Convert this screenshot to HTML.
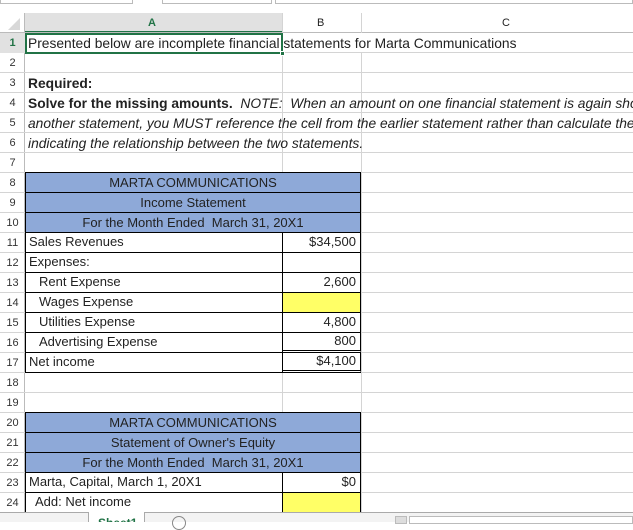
<!DOCTYPE html>
<html><head><meta charset="utf-8"><style>
*{margin:0;padding:0;box-sizing:border-box}
body{width:633px;height:522px;overflow:hidden;background:#fff;font-family:"Liberation Sans",sans-serif;font-size:13px;color:#222;position:relative}
.a{position:absolute}
.hl{position:absolute;left:0;width:633px;height:1px;background:#d4d4d4}
.vl{position:absolute;width:1px;background:#d4d4d4}
.rn{position:absolute;left:0;width:25px;text-align:center;font-size:11px;color:#333;height:20px;line-height:20px}
.t{position:absolute;white-space:nowrap;height:20px;line-height:20px}
.big{font-size:13.8px}
.blue{position:absolute;left:25px;width:336px;height:20px;background:#8ea9d8;border:1px solid #000;border-top:none;text-align:center;line-height:19px}
.cell{position:absolute;border:1px solid #000;border-top:none}
</style></head><body>
<div class="a" style="left:0;top:0;width:133px;height:4px;border:1px solid #bbb;border-top:none"></div>
<div class="a" style="left:162px;top:0;width:110px;height:4px;border:1px solid #bbb;border-top:none"></div>
<div class="a" style="left:275px;top:0;width:358px;height:4px;border:1px solid #bbb;border-top:none"></div>
<div class="a" style="left:25px;top:13px;width:257px;height:20px;background:#e1e1e1;border-bottom:2px solid #217346"></div>
<div class="a" style="left:282px;top:13px;width:351px;height:20px;background:#fff"></div>
<div class="a" style="left:0;top:32px;width:633px;height:1px;background:#bbb"></div>
<div class="a" style="left:24px;top:13px;width:1px;height:500px;background:#bbb"></div>
<div class="a" style="left:8px;top:18px;width:0;height:0;border-left:12px solid transparent;border-bottom:12px solid #d8d8d8"></div>
<div class="t" style="left:148px;top:13px;color:#217346;font-size:11px;font-weight:bold">A</div>
<div class="t" style="left:317px;top:13px;font-size:11px">B</div>
<div class="t" style="left:502px;top:13px;font-size:11px">C</div>
<div class="vl" style="left:282px;top:13px;height:20px"></div>
<div class="vl" style="left:361px;top:13px;height:20px"></div>
<div class="vl" style="left:282px;top:53px;height:120px"></div>
<div class="vl" style="left:361px;top:53px;height:460px"></div>
<div class="vl" style="left:282px;top:373px;height:40px"></div>
<div class="hl" style="top:52px"></div><div class="hl" style="top:72px"></div><div class="hl" style="top:92px"></div><div class="hl" style="top:112px"></div><div class="hl" style="top:132px"></div><div class="hl" style="top:152px"></div><div class="hl" style="top:172px"></div><div class="hl" style="top:192px"></div><div class="hl" style="top:212px"></div><div class="hl" style="top:232px"></div><div class="hl" style="top:252px"></div><div class="hl" style="top:272px"></div><div class="hl" style="top:292px"></div><div class="hl" style="top:312px"></div><div class="hl" style="top:332px"></div><div class="hl" style="top:352px"></div><div class="hl" style="top:372px"></div><div class="hl" style="top:392px"></div><div class="hl" style="top:412px"></div><div class="hl" style="top:432px"></div><div class="hl" style="top:452px"></div><div class="hl" style="top:472px"></div><div class="hl" style="top:492px"></div>
<div class="rn" style="top:33px;background:#e1e1e1;color:#217346;font-weight:bold">1</div>
<div class="rn" style="top:53px">2</div><div class="rn" style="top:73px">3</div><div class="rn" style="top:93px">4</div><div class="rn" style="top:113px">5</div><div class="rn" style="top:133px">6</div><div class="rn" style="top:153px">7</div><div class="rn" style="top:173px">8</div><div class="rn" style="top:193px">9</div><div class="rn" style="top:213px">10</div><div class="rn" style="top:233px">11</div><div class="rn" style="top:253px">12</div><div class="rn" style="top:273px">13</div><div class="rn" style="top:293px">14</div><div class="rn" style="top:313px">15</div><div class="rn" style="top:333px">16</div><div class="rn" style="top:353px">17</div><div class="rn" style="top:373px">18</div><div class="rn" style="top:393px">19</div><div class="rn" style="top:413px">20</div><div class="rn" style="top:433px">21</div><div class="rn" style="top:453px">22</div><div class="rn" style="top:473px">23</div><div class="rn" style="top:493px">24</div>
<div class="a" style="left:25px;top:33px;width:258px;height:21px;border:2px solid #217346;background:#fff"></div>
<div class="a" style="left:280px;top:51px;width:5px;height:5px;background:#217346;border:1px solid #fff"></div>
<div class="t big" style="left:28px;top:34px">Presented below are incomplete financial statements for Marta Communications</div>
<div class="t big" style="left:28px;top:74px;font-weight:bold">Required:</div>
<div class="t big" style="left:28px;top:94px"><b>Solve for the missing amounts.</b>&nbsp; <i>NOTE:&nbsp; When an amount on one financial statement is again shown</i></div>
<div class="t big" style="left:28px;top:114px;font-style:italic">another statement, you MUST reference the cell from the earlier statement rather than calculate the</div>
<div class="t big" style="left:28px;top:134px;font-style:italic">indicating the relationship between the two statements.</div>
<div class="blue" style="top:172px;height:21px;border-top:1px solid #000">MARTA COMMUNICATIONS</div>
<div class="blue" style="top:193px">Income Statement</div>
<div class="blue" style="top:213px">For the Month Ended&nbsp; March 31, 20X1</div>
<div class="cell" style="left:25px;top:233px;width:258px;height:20px"></div><div class="cell" style="left:282px;top:233px;width:79px;height:20px"></div>
<div class="cell" style="left:25px;top:253px;width:258px;height:20px"></div><div class="cell" style="left:282px;top:253px;width:79px;height:20px"></div>
<div class="cell" style="left:25px;top:273px;width:258px;height:20px"></div><div class="cell" style="left:282px;top:273px;width:79px;height:20px"></div>
<div class="cell" style="left:25px;top:293px;width:258px;height:20px"></div><div class="cell" style="left:282px;top:293px;width:79px;height:20px;background:#ffff66"></div>
<div class="cell" style="left:25px;top:313px;width:258px;height:20px"></div><div class="cell" style="left:282px;top:313px;width:79px;height:20px"></div>
<div class="cell" style="left:25px;top:333px;width:258px;height:20px"></div><div class="cell" style="left:282px;top:333px;width:79px;height:20px;border-bottom:3px double #000"></div>
<div class="cell" style="left:25px;top:353px;width:258px;height:20px"></div><div class="cell" style="left:282px;top:353px;width:79px;height:20px;border-bottom:3px double #000"></div>
<div class="t" style="left:29px;top:232px">Sales Revenues</div><div class="t" style="left:282px;width:74px;text-align:right;top:232px">$34,500</div>
<div class="t" style="left:29px;top:252px">Expenses:</div>
<div class="t" style="left:39px;top:272px">Rent Expense</div><div class="t" style="left:282px;width:74px;text-align:right;top:272px">2,600</div>
<div class="t" style="left:39px;top:292px">Wages Expense</div>
<div class="t" style="left:39px;top:312px">Utilities Expense</div><div class="t" style="left:282px;width:74px;text-align:right;top:312px">4,800</div>
<div class="t" style="left:39px;top:332px">Advertising Expense</div><div class="t" style="left:282px;width:74px;text-align:right;top:331px">800</div>
<div class="t" style="left:29px;top:352px">Net income</div><div class="t" style="left:282px;width:74px;text-align:right;top:351px">$4,100</div>
<div class="blue" style="top:412px;height:21px;border-top:1px solid #000">MARTA COMMUNICATIONS</div>
<div class="blue" style="top:433px">Statement of Owner's Equity</div>
<div class="blue" style="top:453px">For the Month Ended&nbsp; March 31, 20X1</div>
<div class="cell" style="left:25px;top:473px;width:258px;height:20px"></div><div class="cell" style="left:282px;top:473px;width:79px;height:20px"></div>
<div class="cell" style="left:25px;top:493px;width:258px;height:20px;border-bottom:none"></div><div class="cell" style="left:282px;top:493px;width:79px;height:20px;background:#ffff66;border-bottom:none"></div>
<div class="t" style="left:29px;top:472px">Marta, Capital, March 1, 20X1</div><div class="t" style="left:282px;width:74px;text-align:right;top:472px">$0</div>
<div class="t" style="left:35px;top:492px">Add: Net income</div>
<div class="a" style="left:0;top:512px;width:633px;height:10px;background:#f3f3f3;border-top:1px solid #aaa"></div>
<div class="a" style="left:88px;top:512px;width:57px;height:10px;background:#fff;border-left:1px solid #aaa;border-right:1px solid #aaa"></div>
<div class="t" style="left:98px;top:516px;height:6px;line-height:14px;color:#217346;font-weight:bold;font-size:12px;overflow:hidden">Sheet1</div>
<div class="a" style="left:172px;top:516px;width:14px;height:14px;border:1px solid #888;border-radius:50%"></div>
<div class="a" style="left:395px;top:516px;width:12px;height:8px;background:#ddd;border:1px solid #bbb"></div>
<div class="a" style="left:409px;top:516px;width:224px;height:8px;background:#fff;border:1px solid #bbb"></div>
</body></html>
